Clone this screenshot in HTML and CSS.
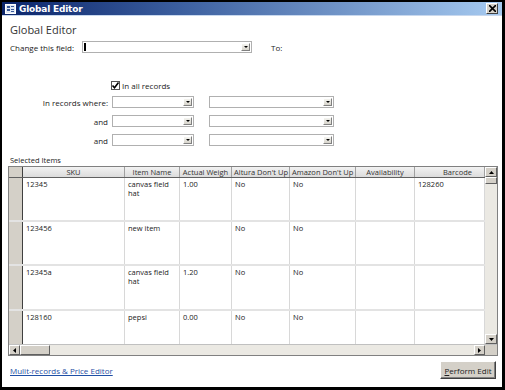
FILE: index.html
```html
<!DOCTYPE html>
<html>
<head>
<meta charset="utf-8">
<link rel="stylesheet" href="styles.css">
</head>
<body>
<div class="window">
  <div class="titlebar">
    <div class="ticon"><svg width="11" height="10" viewBox="0 0 11 10"><rect x="0.5" y="0.5" width="10" height="9" fill="#dfe8f5" stroke="#fff"/><rect x="2" y="2" width="3" height="2" fill="#3a5a9a"/><rect x="6" y="2" width="3" height="1" fill="#3a5a9a"/><rect x="2" y="5" width="3" height="2" fill="#3a5a9a"/><rect x="6" y="5" width="3" height="1" fill="#3a5a9a"/><rect x="6" y="7" width="3" height="1" fill="#3a5a9a"/></svg></div>
    <div class="ttext">Global Editor</div>
    <div class="tclose"><svg width="7" height="7" viewBox="0 0 7 7"><path d="M0 0L7 7M7 0L0 7" stroke="#000" stroke-width="1.6"/></svg></div>
  </div>
  <div class="content">
    <div class="heading">Global Editor</div>
    <div class="row1">
      <span class="lbl">Change this field:</span>
      <div class="combo wide"><span class="caret"></span><span class="btn"><i></i></span></div>
      <span class="lbl to">To:</span>
    </div>
    <div class="chkrow">
      <span class="chk"><svg width="9" height="9" viewBox="0 0 9 9"><path d="M1.5 4.5L3.5 6.8L7.5 1.5" fill="none" stroke="#000" stroke-width="1.6"/></svg></span>
      <span class="lbl">In all records</span>
    </div>
    <div class="cond first">
      <span class="clabel">In records where:</span>
      <div class="combo c1"><span class="btn"><i></i></span></div>
      <div class="combo c2"><span class="btn"><i></i></span></div>
    </div>
    <div class="cond">
      <span class="clabel">and</span>
      <div class="combo c1"><span class="btn"><i></i></span></div>
      <div class="combo c2"><span class="btn"><i></i></span></div>
    </div>
    <div class="cond">
      <span class="clabel">and</span>
      <div class="combo c1"><span class="btn"><i></i></span></div>
      <div class="combo c2"><span class="btn"><i></i></span></div>
    </div>
    <div class="sel">Selected Items</div>
    <div class="grid">
      <div class="gmain">
        <div class="gtable">
          <div class="grow head">
            <div class="sc"></div>
            <div class="c sku">SKU</div>
            <div class="c name">Item Name</div>
            <div class="c wt">Actual Weigh</div>
            <div class="c alt">Altura Don't Up</div>
            <div class="c amz">Amazon Don't Up</div>
            <div class="c av">Availability</div>
            <div class="c bc">Barcode</div>
          </div>
          <div class="grow r1">
            <div class="sc"></div>
            <div class="c sku">12345</div>
            <div class="c name">canvas field hat</div>
            <div class="c wt">1.00</div>
            <div class="c alt">No</div>
            <div class="c amz">No</div>
            <div class="c av"></div>
            <div class="c bc">128260</div>
          </div>
          <div class="grow r2">
            <div class="sc"></div>
            <div class="c sku">123456</div>
            <div class="c name">new item</div>
            <div class="c wt"></div>
            <div class="c alt">No</div>
            <div class="c amz">No</div>
            <div class="c av"></div>
            <div class="c bc"></div>
          </div>
          <div class="grow r3">
            <div class="sc"></div>
            <div class="c sku">12345a</div>
            <div class="c name">canvas field hat</div>
            <div class="c wt">1.20</div>
            <div class="c alt">No</div>
            <div class="c amz">No</div>
            <div class="c av"></div>
            <div class="c bc"></div>
          </div>
          <div class="grow r4">
            <div class="sc"></div>
            <div class="c sku">128160</div>
            <div class="c name">pepsi</div>
            <div class="c wt">0.00</div>
            <div class="c alt">No</div>
            <div class="c amz">No</div>
            <div class="c av"></div>
            <div class="c bc"></div>
          </div>
        </div>
        <div class="vscroll">
          <div class="sbtn"><svg width="5" height="3" viewBox="0 0 5 3"><path d="M0 3L2.5 0L5 3Z" fill="#000"/></svg></div>
          <div class="vthumb"></div>
          <div class="vtrack"></div>
          <div class="sbtn"><svg width="5" height="3" viewBox="0 0 5 3"><path d="M0 0L2.5 3L5 0Z" fill="#000"/></svg></div>
        </div>
      </div>
      <div class="hscroll">
        <div class="hbtn"><svg width="3" height="5" viewBox="0 0 3 5"><path d="M3 0L0 2.5L3 5Z" fill="#000"/></svg></div>
        <div class="hthumb"></div>
        <div class="htrack"></div>
        <div class="hbtn"><svg width="3" height="5" viewBox="0 0 3 5"><path d="M0 0L3 2.5L0 5Z" fill="#000"/></svg></div>
        <div class="corner"></div>
      </div>
    </div>
    <div class="footer">
      <a class="link">Mulit-records &amp; Price Editor</a>
      <div class="pbtn"><u>P</u>erform Edit</div>
    </div>
  </div>
</div>
</body>
</html>
```
FILE: styles.css
```css
* { box-sizing: border-box; }
html, body { margin: 0; padding: 0; background: #fff; }
body { font-family: "DejaVu Sans", Verdana, sans-serif; font-size: 8px; color: #222; }
.window {
  width: 505px; height: 390px;
  border: 2px solid #000;
  border-right-width: 3px;
  border-bottom-width: 3px;
  display: flex; flex-direction: column;
  background: #fff;
}
.titlebar {
  height: 14px;
  background: linear-gradient(to right, #0a246a 0%, #3b5e9e 35%, #a6caf0 100%);
  display: flex; align-items: center;
  padding: 0 3px 0 3px;
  border-bottom: 1px solid #c8d8ee;
}
.ticon { width: 11px; height: 10px; display: flex; }
.ttext { color: #fff; font-weight: bold; font-size: 9px; margin-left: 3px; flex: 1; font-family: "DejaVu Sans", sans-serif; letter-spacing: -0.2px; }
.tclose {
  width: 12px; height: 11px; background: #d4d0c8;
  border: 1px solid; border-color: #fff #404040 #404040 #fff;
  display: flex; align-items: center; justify-content: center;
  margin-right: 1px;
}
.content { flex: 1; display: flex; flex-direction: column; padding: 0 5px 0 6px; }
.heading { font-size: 11px; color: #333; margin-top: 7px; margin-left: 2px; height: 14px; font-family: "Open Sans", sans-serif; line-height: 14px; }
.row1 { display: flex; align-items: center; margin-top: 4px; height: 12px; padding-left: 2px; }
.lbl { font-family: "Open Sans", sans-serif; font-size: 8px; color: #222; }
.row1 .combo { margin-left: 8px; }
.to { margin-left: 19px; }
.combo {
  height: 12px; border: 1px solid #b0b0b0; background: #fff;
  display: flex; justify-content: flex-end; align-items: stretch;
  position: relative;
}
.combo.wide { width: 170px; }
.combo .btn {
  width: 9px; margin: 1px; background: linear-gradient(#f4f4f0, #d8d5cc);
  border: 1px solid; border-color: #fff #808080 #808080 #fff;
  display: flex; align-items: center; justify-content: center;
}
.combo .btn i { display: block; width: 0; height: 0; border-left: 2px solid transparent; border-right: 2px solid transparent; border-top: 2px solid #000; }
.caret { position: absolute; left: 1px; top: 1px; width: 2px; height: 8px; background: #000; }
.chkrow { display: flex; align-items: center; margin-top: 27px; margin-left: 103px; height: 11px; gap: 2px; }
.chk { width: 9px; height: 9px; border: 1px solid #555; background: #fff; display: flex; }
.chk svg { margin: -1px; }
.cond { display: flex; align-items: center; height: 12px; margin-top: 7px; }
.cond.first { margin-top: 5px; }
.clabel { width: 100px; text-align: right; font-family: "Open Sans", sans-serif; font-size: 8px; color: #222; }
.combo.c1 { width: 82px; margin-left: 4px; }
.combo.c2 { width: 125px; margin-left: 15px; }
.sel { font-family: "Open Sans", sans-serif; font-size: 7.5px; margin-top: 9px; margin-left: 2px; height: 10px; line-height: 10px; color: #222; }
.grid { margin-top: 1px; width: 490px; height: 190px; border: 1px solid #808080; display: flex; flex-direction: column; background: #fff; }
.gmain { flex: 1; display: flex; overflow: hidden; }
.gtable { flex: 1; overflow: hidden; }
.grow { display: flex; border-bottom: 2px solid #e3e3e3; }
.grow.head { height: 11px; border-bottom: 1px solid #606060; background: linear-gradient(#f2f2f2, #dcdcdc); }
.grow.r1, .grow.r2 { height: 44px; }
.grow.r3 { height: 45px; }
.grow.r4 { height: 40px; border-bottom: none; }
.sc { width: 14px; flex: none; background: #d4d0c8; border-right: 1px solid #404040; }
.c { flex: none; border-right: 1px solid #d8d8d8; padding: 2px 3px; font-family: "Open Sans", sans-serif; font-size: 7.5px; line-height: 9px; color: #222; overflow: hidden; }
.head .c { text-align: center; padding: 0 2px; line-height: 10px; white-space: nowrap; border-right: 1px solid #a0a0a0; color: #333; }
.sku { width: 102px; }
.name { width: 55px; }
.wt { width: 52px; }
.alt { width: 58px; }
.amz { width: 66px; }
.av { width: 59px; }
.bc { width: 70px; }
.head .bc { text-align: right; padding-right: 12px; }
.r1 .name, .r3 .name { padding-right: 10px; }
.vscroll { width: 12px; flex: none; background: #ebe9e3; display: flex; flex-direction: column; }
.sbtn, .hbtn {
  background: #d4d0c8; border: 1px solid; border-color: #fff #606060 #606060 #fff;
  display: flex; align-items: center; justify-content: center;
}
.sbtn { height: 10px; }
.vthumb { height: 7px; background: #d4d0c8; border: 1px solid; border-color: #fff #606060 #606060 #fff; }
.vtrack { flex: 1; }
.hscroll { height: 11px; flex: none; display: flex; background: #ebe9e3; border-top: 1px solid #c0c0c0; }
.hbtn { width: 11px; }
.hthumb { width: 30px; background: #d4d0c8; border: 1px solid; border-color: #fff #606060 #606060 #fff; }
.htrack { flex: 1; }
.corner { width: 12px; background: #d4d0c8; }
.footer { display: flex; align-items: center; justify-content: space-between; margin-top: 5px; padding-left: 2px; padding-right: 1px; }
.link { color: #1f4fa5; text-decoration: underline; font-family: "Open Sans", sans-serif; font-size: 8px; }
.pbtn {
  width: 56px; height: 18px; background: #d4d0c8;
  border: 1px solid; border-color: #fff #404040 #404040 #fff;
  box-shadow: inset -1px -1px 0 #808080;
  display: flex; align-items: center; justify-content: center;
  font-family: "Open Sans", sans-serif; font-size: 8px; color: #222;
}
```
